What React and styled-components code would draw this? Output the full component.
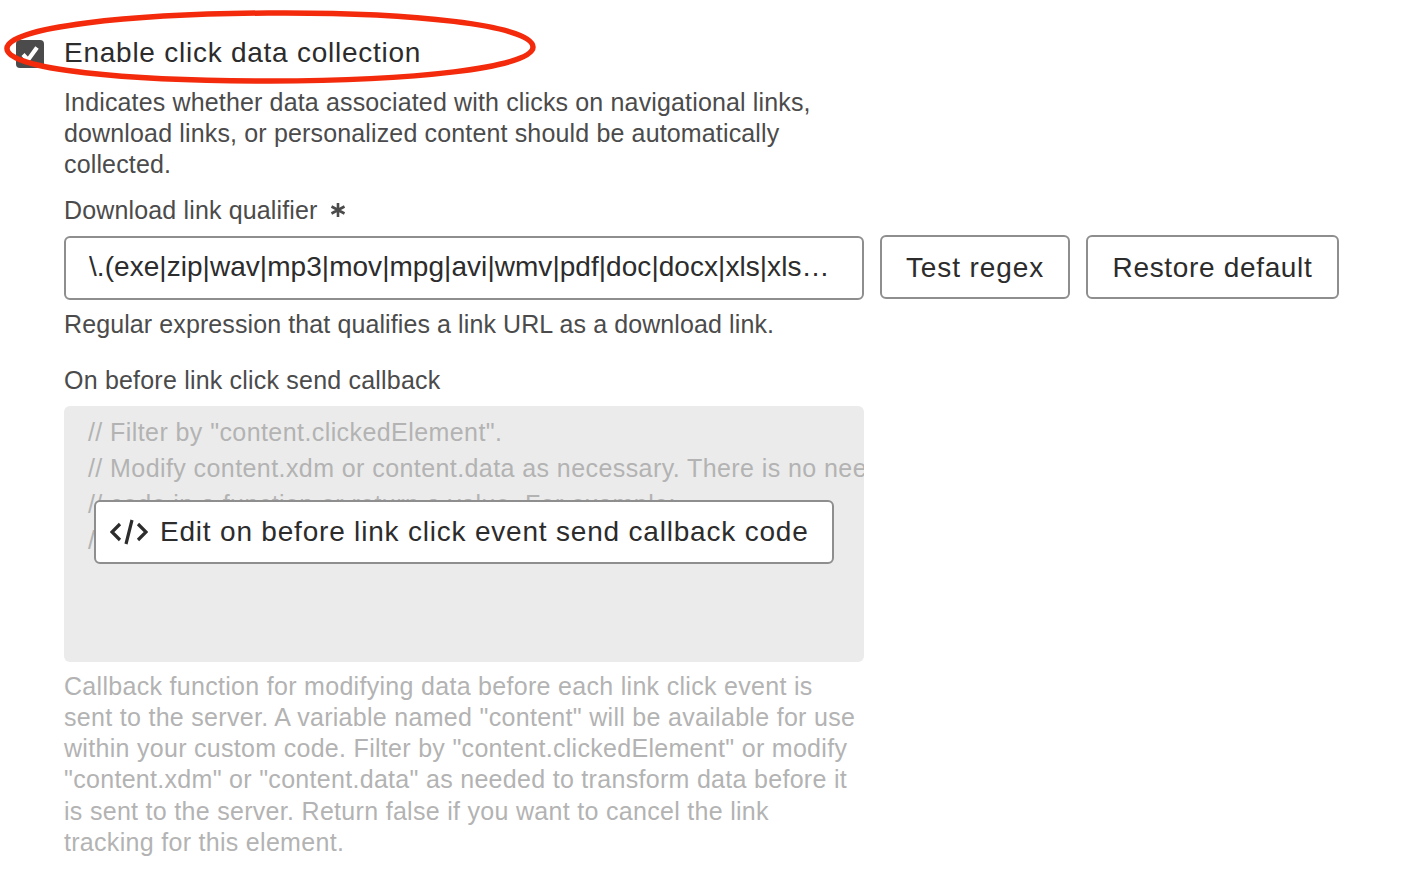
import React from "react"
import styled, { createGlobalStyle } from 'styled-components'

const Global = createGlobalStyle`
    html, body {
        margin: 0;
        background: #fff;
        font-family: "Liberation Sans", Arial, sans-serif;
        color: #2c2c2c;
    }
`;

const Page = styled.div`
    position: relative;
    width: 1402px;
    height: 876px;
    overflow: hidden;
    padding: 36px 0 0 16px;
    box-sizing: border-box;
`;

const Marker = styled.svg`
    position: absolute;
    left: 0;
    top: 0;
    width: 545px;
    height: 95px;
    pointer-events: none;
`;

const CheckRow = styled.label`
    display: flex;
    align-items: center;
    gap: 20px;
    height: 33px;
    font-size: 28px;
    letter-spacing: 0.75px;
    color: #2c2c2c;
`;

const Box = styled.span`
    width: 28px;
    height: 28px;
    border-radius: 4px;
    background: #4b4b4b;
    display: flex;
    align-items: center;
    justify-content: center;
    flex: none;
    margin-top: 2px;
`;

const Body = styled.div`
    margin: 0 0 0 48px;
    display: flex;
    flex-direction: column;
`;

const Help = styled.div`
    font-size: 25px;
    line-height: 31.2px;
    letter-spacing: ${props => props.$spacing || '0.15px'};
    color: ${props => props.$muted ? '#b3b3b3' : '#4b4b4b'};
    margin-top: ${props => props.$top || 0}px;
    white-space: nowrap;
`;

const Label = styled.div`
    font-size: 25px;
    line-height: 31px;
    letter-spacing: ${props => props.$spacing || '0.2px'};
    color: #4b4b4b;
    margin-top: ${props => props.$top}px;
    margin-bottom: ${props => props.$bottom}px;
    display: flex;
    align-items: center;
    gap: 12px;
`;

const Row = styled.div`
    display: flex;
    align-items: flex-start;
    gap: 16px;
`;

const Field = styled.div`
    width: 800px;
    height: 64px;
    box-sizing: border-box;
    border: 2px solid #8e8e8e;
    border-radius: 6px;
    padding: 0 26px 2px 23px;
    display: flex;
    align-items: center;
    font-size: 28px;
    letter-spacing: 0.05px;
    color: #2c2c2c;
    white-space: nowrap;
    overflow: hidden;
`;

const FieldText = styled.span`
    overflow: hidden;
    text-overflow: ellipsis;
`;

const Button = styled.button`
    height: 64px;
    width: ${props => props.$width}px;
    margin-top: -1px;
    box-sizing: border-box;
    border: 2px solid #8e8e8e;
    border-radius: 6px;
    background: #fff;
    font: inherit;
    font-size: 28px;
    letter-spacing: ${props => props.$spacing};
    color: #2c2c2c;
    padding: 3px 0 0;
`;

const Editor = styled.div`
    position: relative;
    width: 800px;
    height: 256px;
    margin-bottom: 9px;
    border-radius: 6px;
    background: #ebebeb;
    overflow: hidden;
    padding: 8px 0 0 24px;
    box-sizing: border-box;
`;

const CodeLine = styled.div`
    font-size: 25px;
    line-height: 36px;
    letter-spacing: 0.42px;
    color: #b3b3b3;
    white-space: nowrap;
`;

const EditButton = styled.button`
    position: absolute;
    left: 30px;
    top: 94px;
    width: 740px;
    height: 64px;
    box-sizing: border-box;
    border: 2px solid #8e8e8e;
    border-radius: 6px;
    background: #fff;
    font: inherit;
    font-size: 28px;
    letter-spacing: 0.8px;
    color: #2c2c2c;
    padding: 0 0 0 14px;
    display: flex;
    align-items: center;
    gap: 12px;
    white-space: nowrap;
`;

const App = () => (
    <Page>
        <Global />
        <CheckRow>
            <Box>
                <svg width="20" height="20" viewBox="0 0 20 20" fill="none">
                    <path d="M3 10.500l5 5.500L17 3.500" stroke="#fff" strokeWidth="4.2" />
                </svg>
            </Box>
            Enable click data collection
        </CheckRow>
        <Body>
            <Help $top={18}>
                Indicates whether data associated with clicks on navigational links,<br />
                download links, or personalized content should be automatically<br />
                collected.
            </Help>
            <Label $top={14} $bottom={10} $spacing="0.15px">
                Download link qualifier
                <svg width="16" height="16" viewBox="0 0 16 16" stroke="#4b4b4b" strokeWidth="2.6">
                    <path d="M8 1v14M1.500 4.500l13 7M14.500 4.500l-13 7" />
                </svg>
            </Label>
            <Row>
                <Field>
                    <FieldText>\.(exe|zip|wav|mp3|mov|mpg|avi|wmv|pdf|doc|docx|xls|xlsx|ppt|pptx)</FieldText>
                </Field>
                <Button $width={190} $spacing="0.9px">Test regex</Button>
                <Button $width={253} $spacing="0.67px">Restore default</Button>
            </Row>
            <Help $top={9} $spacing="0.1px">Regular expression that qualifies a link URL as a download link.</Help>
            <Label $top={25} $bottom={10}>On before link click send callback</Label>
            <Editor>
                <CodeLine>// Filter by "content.clickedElement".</CodeLine>
                <CodeLine>// Modify content.xdm or content.data as necessary. There is no need to use</CodeLine>
                <CodeLine>// code in a function or return a value. For example:</CodeLine>
                <CodeLine>// content.xdm</CodeLine>
                <EditButton>
                    <svg width="38" height="30" viewBox="0 0 38 30" fill="none" stroke="#2c2c2c" strokeWidth="3.2">
                        <path d="M10 7L2 15l8 8M28 7l8 8-8 8M22 3l-6 24" />
                    </svg>
                    Edit on before link click event send callback code
                </EditButton>
            </Editor>
            <Help $muted $spacing="0.3px">
                Callback function for modifying data before each link click event is<br />
                sent to the server. A variable named "content" will be available for use<br />
                within your custom code. Filter by "content.clickedElement" or modify<br />
                "content.xdm" or "content.data" as needed to transform data before it<br />
                is sent to the server. Return false if you want to cancel the link<br />
                tracking for this element.
            </Help>
        </Body>
        <Marker viewBox="0 0 545 95" fill="none">
            <path d="M7 48C9 27 130 14 268 13C410 12 533 25 533 47C533 68 410 81 270 81C130 81 5 70 7 48Z" stroke="#f42a0c" strokeWidth="5.500" />
        </Marker>
    </Page>
)

export default App;
